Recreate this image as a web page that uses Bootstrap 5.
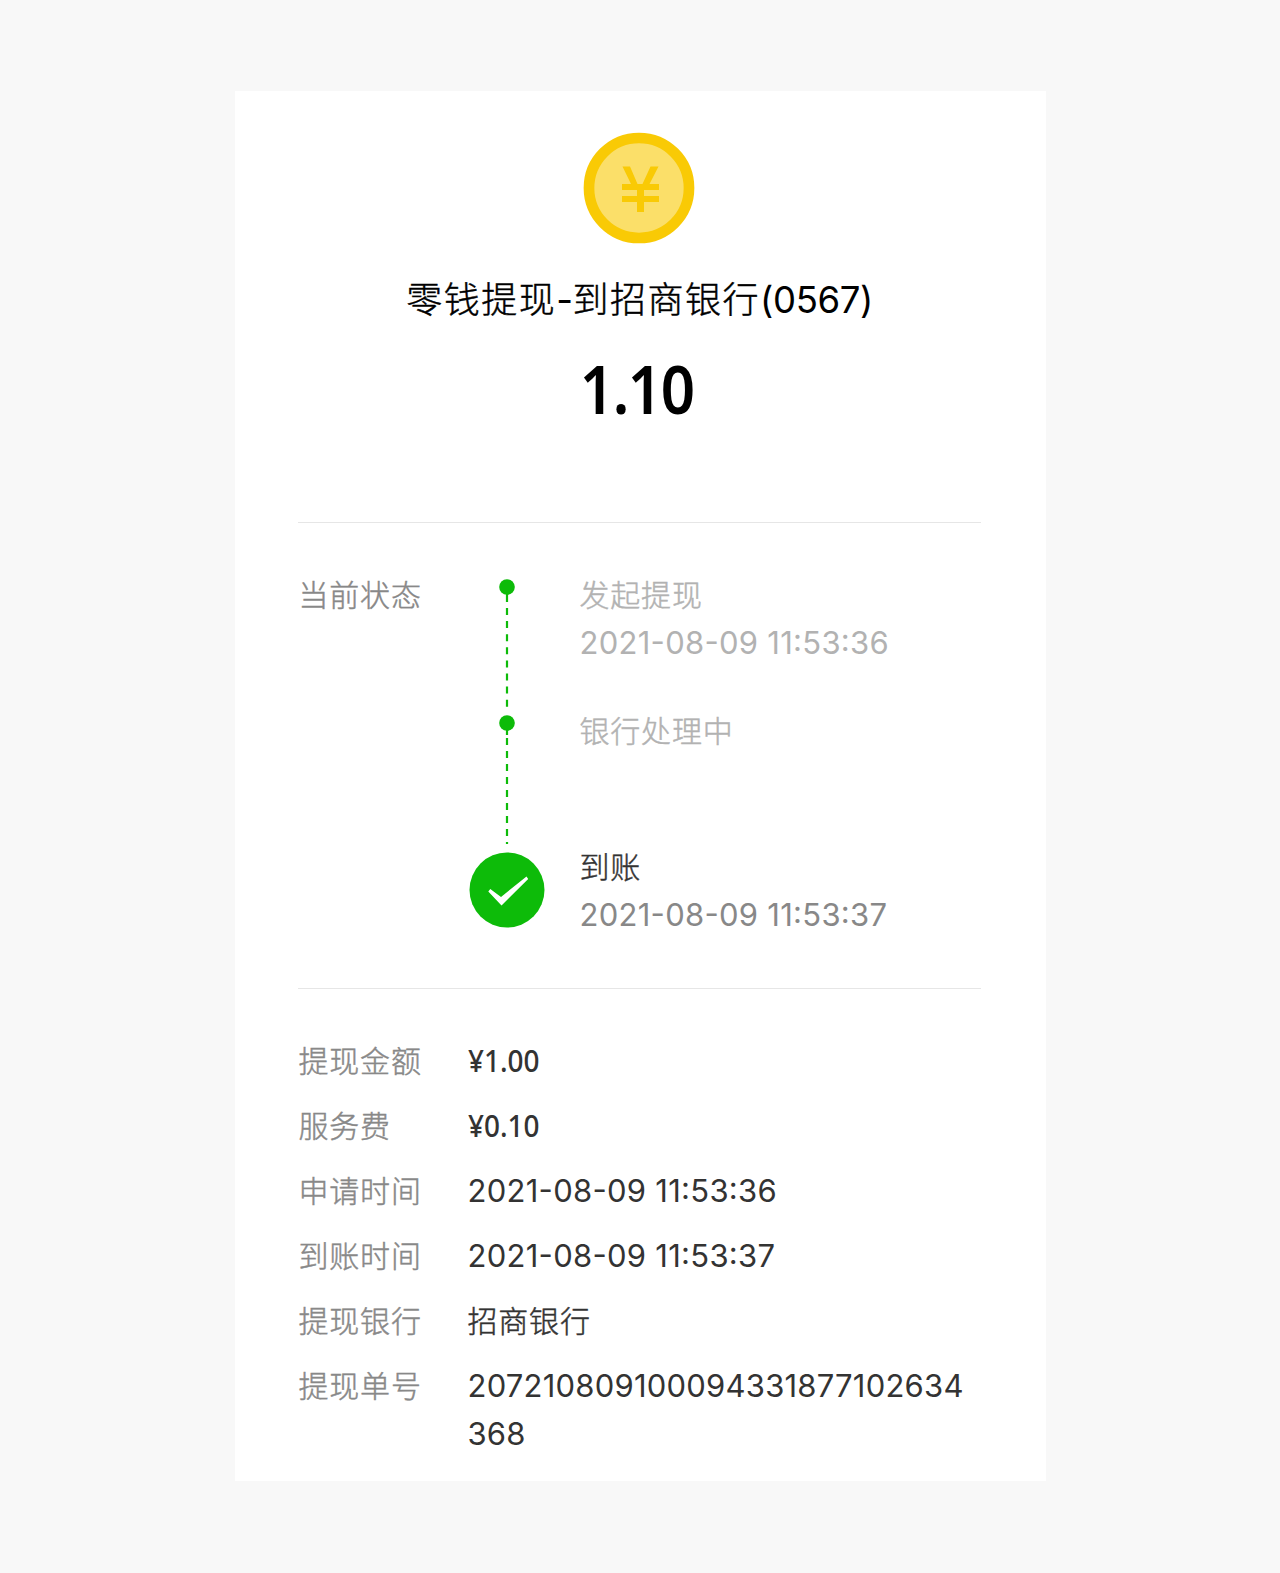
<!DOCTYPE html>
<html lang="zh-CN">
<head>
<meta charset="utf-8">
<meta name="viewport" content="width=device-width, initial-scale=1">
<title>零钱提现</title>
<link href="https://cdn.jsdelivr.net/npm/bootstrap@5.3.0/dist/css/bootstrap.min.css" rel="stylesheet">
<style>
  body { background: #f8f8f8; font-family: Inter, "Noto Sans CJK SC", sans-serif; color: #333; }
  .bill { width: 811px; height: 1390px; margin: 91px 0 92px 235px; padding: 41px 65px 0 63px; background: #fff; font-size: 30px; line-height: 48px; }
  .zh { font-family: "Noto Sans CJK SC", sans-serif; font-weight: 300; letter-spacing: .8px; line-height: 44px; padding-bottom: 4px; -webkit-text-stroke: .45px currentColor; }
  .bill-head { height: 390px; }
  .coin { width: 112px; height: 112px; margin-left: -1px; margin-top: -.5px; }
  .bill-title { margin-top: 31.500px; font-size: 36.500px; line-height: 48px; color: #000; white-space: nowrap; letter-spacing: -.4px; }
  .bill-title .zh { font-size: 36px; letter-spacing: 1.5px; }
  .bill-sum { margin: 28.500px 6px 0 0; font: 600 66px/70px "Noto Sans", sans-serif; letter-spacing: -1.500px; color: #000; transform: scaleX(.91); }
  .rule { height: 1px; background: #e6e6e6; }
  .status { height: 465px; padding-top: 48px; }
  .label-col { width: 169.500px; color: #888; flex: none; padding-left: .5px; }
  .track-col { width: 76px; margin: 0 34.500px 0 1.500px; flex: none; }
  .step { height: 136px; color: #b2b2b2; }
  .num { font-size: 31px; letter-spacing: .28px; white-space: nowrap; font-feature-settings: "calt" 1; }
  .serial { letter-spacing: .22px; }
  .grey { color: #888; }
  .details { padding-top: 48px; }
  .detail { margin-bottom: 17px; }
  .money { font-family: "Noto Sans", sans-serif; font-weight: 500; font-size: 31px; line-height: 46px; transform: scaleX(.9); transform-origin: left; }
</style>
<script src="https://cdn.jsdelivr.net/npm/bootstrap@5.3.0/dist/js/bootstrap.bundle.min.js"></script>
</head>
<body>
<main class="bill">
  <header class="bill-head d-flex flex-column align-items-center">
    <svg class="coin" viewBox="0 0 112 112" aria-hidden="true">
      <circle cx="56" cy="56" r="50" fill="#fbdf69" stroke="#f9ca05" stroke-width="10.7"/>
      <path d="M39.5 34.500H47L54.5 52H59.500L67.500 34.500H75.500L66.500 52H76V58H61V64H76V70H61V80H54V70H39V64H54V58H39V52H48Z" fill="#f9ca05"/>
    </svg>
    <h1 class="bill-title mb-0 fw-normal"><span class="zh">零钱提现</span>-<span class="zh">到招商银行</span>(0567)</h1>
    <div class="bill-sum">1.10</div>
  </header>
  <div class="rule"></div>
  <section class="status d-flex">
    <div class="label-col zh">当前状态</div>
    <div class="track-col">
      <svg class="d-block" width="76" height="360" viewBox="0 0 76 360" aria-hidden="true">
        <g stroke="#0dbb09" stroke-width="2.200">
          <path d="M38 16V31"/>
          <path d="M38 37V137" stroke-dasharray="7 6.100"/>
          <path d="M38 152V164"/>
          <path d="M38 167V273" stroke-dasharray="7 6"/>
        </g>
        <circle cx="38" cy="16" r="7.800" fill="#0dbb09"/>
        <circle cx="38" cy="152" r="7.800" fill="#0dbb09"/>
        <circle cx="38" cy="319" r="37.500" fill="#0dbb09"/>
        <path d="M19.300 320.500L21.300 318L32 326L57.500 305.500L59.200 308L32.500 334.500Z" fill="#fff"/>
      </svg>
    </div>
    <div>
      <div class="step"><div class="zh">发起提现</div><div class="num">2021-08-09 11:53:36</div></div>
      <div class="step"><div class="zh">银行处理中</div></div>
      <div><div class="zh">到账</div><div class="num grey">2021-08-09 11:53:37</div></div>
    </div>
  </section>
  <div class="rule"></div>
  <section class="details">
    <div class="detail d-flex"><div class="label-col zh">提现金额</div><div class="money">¥1.00</div></div>
    <div class="detail d-flex"><div class="label-col zh">服务费</div><div class="money">¥0.10</div></div>
    <div class="detail d-flex"><div class="label-col zh">申请时间</div><div class="num">2021-08-09 11:53:36</div></div>
    <div class="detail d-flex"><div class="label-col zh">到账时间</div><div class="num">2021-08-09 11:53:37</div></div>
    <div class="detail d-flex"><div class="label-col zh">提现银行</div><div class="zh">招商银行</div></div>
    <div class="detail d-flex"><div class="label-col zh">提现单号</div><div class="num serial">207210809100094331877102634<br>368</div></div>
  </section>
</main>
</body>
</html>
